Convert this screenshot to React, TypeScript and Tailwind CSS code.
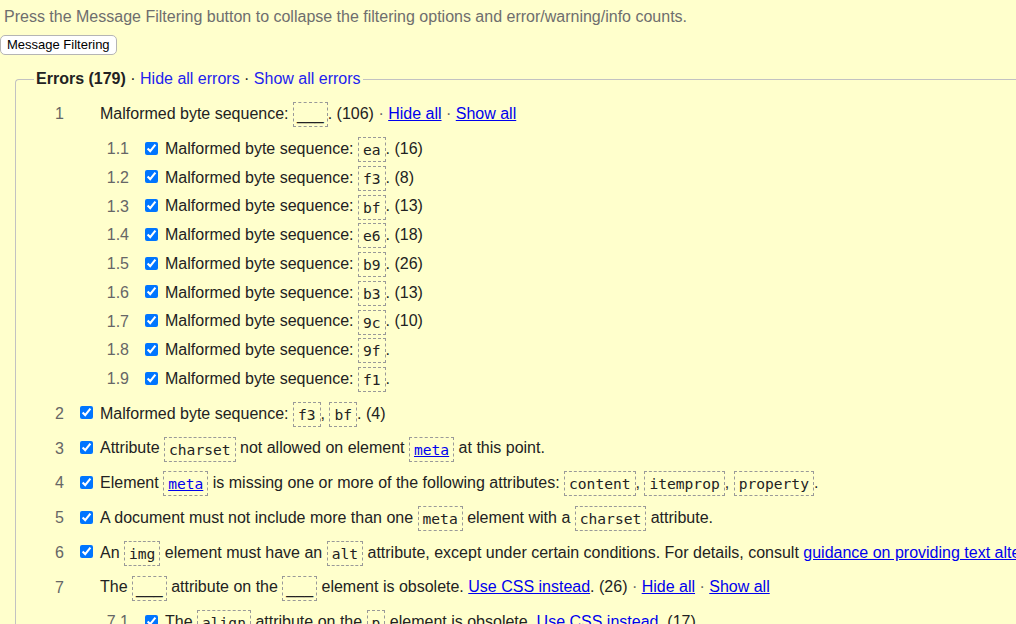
import type { ReactNode } from 'react'

// Message filtering panel - validator results list

const Code = ({ children, link = false }: { children: ReactNode; link?: boolean }) => (
  <code className="inline-block border border-dashed border-[#999] px-[4px] py-[2px] align-middle font-['DejaVu_Sans_Mono',monospace] text-[14.6px] leading-[19px] text-[#222]">
    {link ? <a className="cursor-pointer text-[#0000ee] underline">{children}</a> : children}
  </code>
)

// empty placeholder box (no value given)
const Blank = () => (
  <span className="inline-block border border-dashed border-[#999] px-[3px] py-[2px] align-middle font-['Liberation_Sans',Arial,sans-serif] text-[16px] leading-[19px] text-[#222]">
    ___
  </span>
)

const Link = ({ children }: { children: ReactNode }) => (
  <a className="cursor-pointer text-[#0000ee] underline">{children}</a>
)

const Dot = () => <span className="text-[#666]"> · </span>

const Row = ({
  num,
  check = false,
  sub = false,
  children,
}: {
  num: string
  check?: boolean
  sub?: boolean
  children: ReactNode
}) => (
  <div className={`flex h-[28.75px] items-center whitespace-nowrap ${sub ? 'pl-[65px]' : ''}`}>
    <span className="w-[30px] shrink-0 text-right text-[#666]">{num}</span>
    <span className="flex w-[36px] shrink-0 items-center pl-[16px]">
      {check && (
        <input
          type="checkbox"
          defaultChecked
          className="m-0 h-[13px] w-[13px] -translate-y-[1px] accent-[#0075ff]"
        />
      )}
    </span>
    <span className="leading-[28.75px]">{children}</span>
  </div>
)

const bytes: [string, string][] = [
  ['ea', '(16)'],
  ['f3', '(8)'],
  ['bf', '(13)'],
  ['e6', '(18)'],
  ['b9', '(26)'],
  ['b3', '(13)'],
  ['9c', '(10)'],
  ['9f', ''],
  ['f1', ''],
]

export default function App() {
  return (
    <div className="h-[624px] w-[1016px] overflow-hidden bg-[#ffffcc] font-['Liberation_Sans',Arial,sans-serif] text-[16px] text-[#222]">
      <p className="pl-[4px] pt-[7px] leading-[20px] text-[#6e6e6e]">
        Press the Message Filtering button to collapse the filtering options and error/warning/info counts.
      </p>
      <button className="mt-[8px] block h-[20px] rounded-[5px] border border-[#b5b5b5] bg-white px-[6px] text-[13px] leading-[18px] text-black">
        Message Filtering
      </button>

      <fieldset className="ml-[15px] mt-[13px] min-w-0 rounded-tl-[4px] border border-r-0 border-[#c2c2c2] pl-[18px]">
        <legend className="px-[2px] leading-[22px]">
          <strong className="font-bold">Errors (179)</strong>
          <span> · </span>
          <a className="cursor-pointer text-[#2222ee]">Hide all errors</a>
          <span> · </span>
          <a className="cursor-pointer text-[#2222ee]">Show all errors</a>
        </legend>

        <div className="flex flex-col gap-[6px] pt-[10px]">
          <div>
            <Row num="1">
              Malformed byte sequence: <Blank />. (106)
              <Dot />
              <Link>Hide all</Link>
              <Dot />
              <Link>Show all</Link>
            </Row>
            <div className="mt-[6px]">
              {bytes.map(([b, c], i) => (
                <Row key={b + i} num={`1.${i + 1}`} check sub>
                  Malformed byte sequence: <Code>{b}</Code>.{c && ` ${c}`}
                </Row>
              ))}
            </div>
          </div>

          <Row num="2" check>
            Malformed byte sequence: <Code>f3</Code>, <Code>bf</Code>. (4)
          </Row>
          <Row num="3" check>
            Attribute <Code>charset</Code> not allowed on element <Code link>meta</Code> at this point.
          </Row>
          <Row num="4" check>
            Element <Code link>meta</Code> is missing one or more of the following attributes:{' '}
            <Code>content</Code>, <Code>itemprop</Code>, <Code>property</Code>.
          </Row>
          <Row num="5" check>
            A document must not include more than one <Code>meta</Code> element with a <Code>charset</Code>{' '}
            attribute.
          </Row>
          <Row num="6" check>
            An <Code>img</Code> element must have an <Code>alt</Code> attribute, except under certain
            conditions. For details, consult <Link>guidance on providing text alternatives for images</Link>.
          </Row>
          <div>
            <Row num="7">
              The <Blank /> attribute on the <Blank /> element is obsolete.{' '}
              <Link>Use CSS instead</Link>. (26)
              <Dot />
              <Link>Hide all</Link>
              <Dot />
              <Link>Show all</Link>
            </Row>
            <div className="mt-[6px]">
              <Row num="7.1" check sub>
                The <Code>align</Code> attribute on the <Code>p</Code> element is obsolete.{' '}
                <Link>Use CSS instead</Link>. (17)
              </Row>
            </div>
          </div>
        </div>
      </fieldset>
    </div>
  )
}
